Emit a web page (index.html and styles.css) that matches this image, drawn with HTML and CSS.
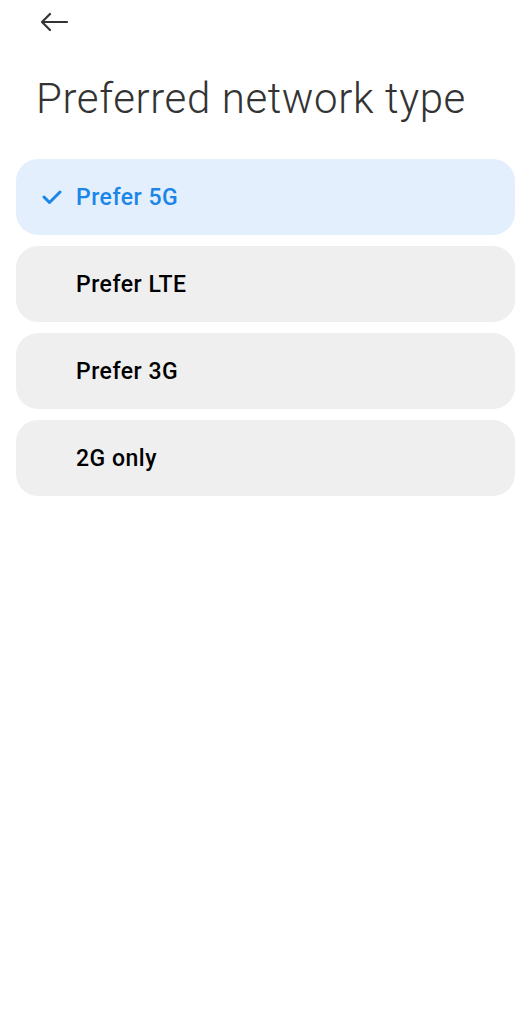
FILE: index.html
```html
<!DOCTYPE html>
<html lang="en">
<head>
  <meta charset="UTF-8">
  <title>Preferred network type</title>
  <link rel="stylesheet" href="styles.css">
</head>
<body>
  <div class="topbar">
    <button class="back" aria-label="Back">
      <svg width="28" height="20" viewBox="0 0 28 20">
        <path d="M27 10H2M10 2L2 10l8 8" fill="none" stroke="#333" stroke-width="2.2" stroke-linecap="round" stroke-linejoin="round"/>
      </svg>
    </button>
  </div>
  <h1 class="title">Preferred network type</h1>

  <div class="options">
    <div class="option selected">
      <span class="check">
        <svg width="20" height="14" viewBox="0 0 20 14">
          <path d="M2 7l5.5 5.5L18 2" fill="none" stroke="#1a86e8" stroke-width="3" stroke-linecap="round" stroke-linejoin="round"/>
        </svg>
      </span>
      <span class="label">Prefer 5G</span>
    </div>
    <div class="option">
      <span class="check"></span>
      <span class="label">Prefer LTE</span>
    </div>
    <div class="option">
      <span class="check"></span>
      <span class="label">Prefer 3G</span>
    </div>
    <div class="option">
      <span class="check"></span>
      <span class="label">2G only</span>
    </div>
  </div>
</body>
</html>
```
FILE: styles.css
```css
body {
  margin: 0;
  font-family: Roboto, 'Noto Sans', sans-serif;
  background: #fff;
  color: #000;
}
.topbar {
  height: 44px;
  padding-left: 40px;
  display: flex;
  align-items: center;
}
.back {
  background: none;
  border: none;
  padding: 0;
  display: flex;
  cursor: pointer;
}
.title {
  margin: 30px 0 0 36px;
  font-weight: 300;
  font-size: 42px;
  line-height: 50px;
  color: #333;
  letter-spacing: 0.6px;
}
.options {
  margin-top: 35px;
  padding: 0 16px;
  display: flex;
  flex-direction: column;
  gap: 11px;
}
.option {
  height: 76px;
  border-radius: 22px;
  background: #efefef;
  display: flex;
  align-items: center;
}
.check {
  width: 60px;
  display: flex;
  justify-content: flex-end;
}
.check svg {
  margin-right: 14px;
}
.label {
  font-size: 23px;
  font-weight: 500;
  letter-spacing: 0.5px;
}
.selected {
  background: #e3effd;
  color: #1a86e8;
}
```
